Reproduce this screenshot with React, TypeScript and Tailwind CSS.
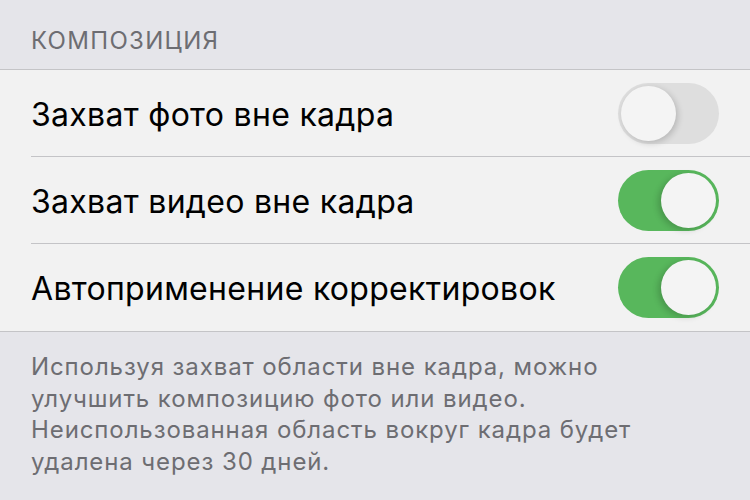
import React from "react";

function Toggle({ on }: { on: boolean }) {
  return (
    <div
      className={
        "relative w-[101px] h-[61px] rounded-full shrink-0 " +
        (on ? "bg-[#58b75c]" : "bg-[#dedede]")
      }
    >
      <div
        className={
          "absolute top-[3px] w-[55px] h-[55px] rounded-full bg-[#f4f4f4] " +
          (on
            ? "right-[3px] shadow-[-3px_2px_6px_rgba(0,0,0,0.18)]"
            : "left-[3px] shadow-[2px_2px_6px_rgba(0,0,0,0.18)]")
        }
      />
    </div>
  );
}

function Row({ label, on, last }: { label: string; on: boolean; last?: boolean }) {
  return (
    <div className="pl-[31px]">
      <div
        className={
          "h-[87px] flex items-center justify-between pr-[31px] " +
          (last ? "" : "border-b border-[#c4c4c7]")
        }
      >
        <span className="text-[32px] tracking-[0.3px] text-black leading-none pt-[3px]">{label}</span>
        <Toggle on={on} />
      </div>
    </div>
  );
}

export default function App() {
  return (
    <div
      className="w-[750px] h-[500px] bg-[#e5e5ea] overflow-hidden"
      style={{ fontFamily: "Inter, 'Noto Sans', sans-serif" }}
    >
      <div className="h-[69px] pl-[31px] pt-[27px]">
        <div className="text-[24px] tracking-[1.3px] leading-[28px] text-[#6d6d72]">КОМПОЗИЦИЯ</div>
      </div>
      <div className="bg-[#f2f2f2] border-y border-[#c4c4c7]">
        <Row label="Захват фото вне кадра" on={false} />
        <Row label="Захват видео вне кадра" on={true} />
        <Row label="Автоприменение корректировок" on={true} last />
      </div>
      <div className="pl-[31px] pt-[19px] text-[24px] tracking-[0.9px] leading-[31.7px] text-[#6d6d72] whitespace-nowrap">
        Используя захват области вне кадра, можно
        <br />
        улучшить композицию фото или видео.
        <br />
        Неиспользованная область вокруг кадра будет
        <br />
        удалена через 30 дней.
      </div>
    </div>
  );
}
